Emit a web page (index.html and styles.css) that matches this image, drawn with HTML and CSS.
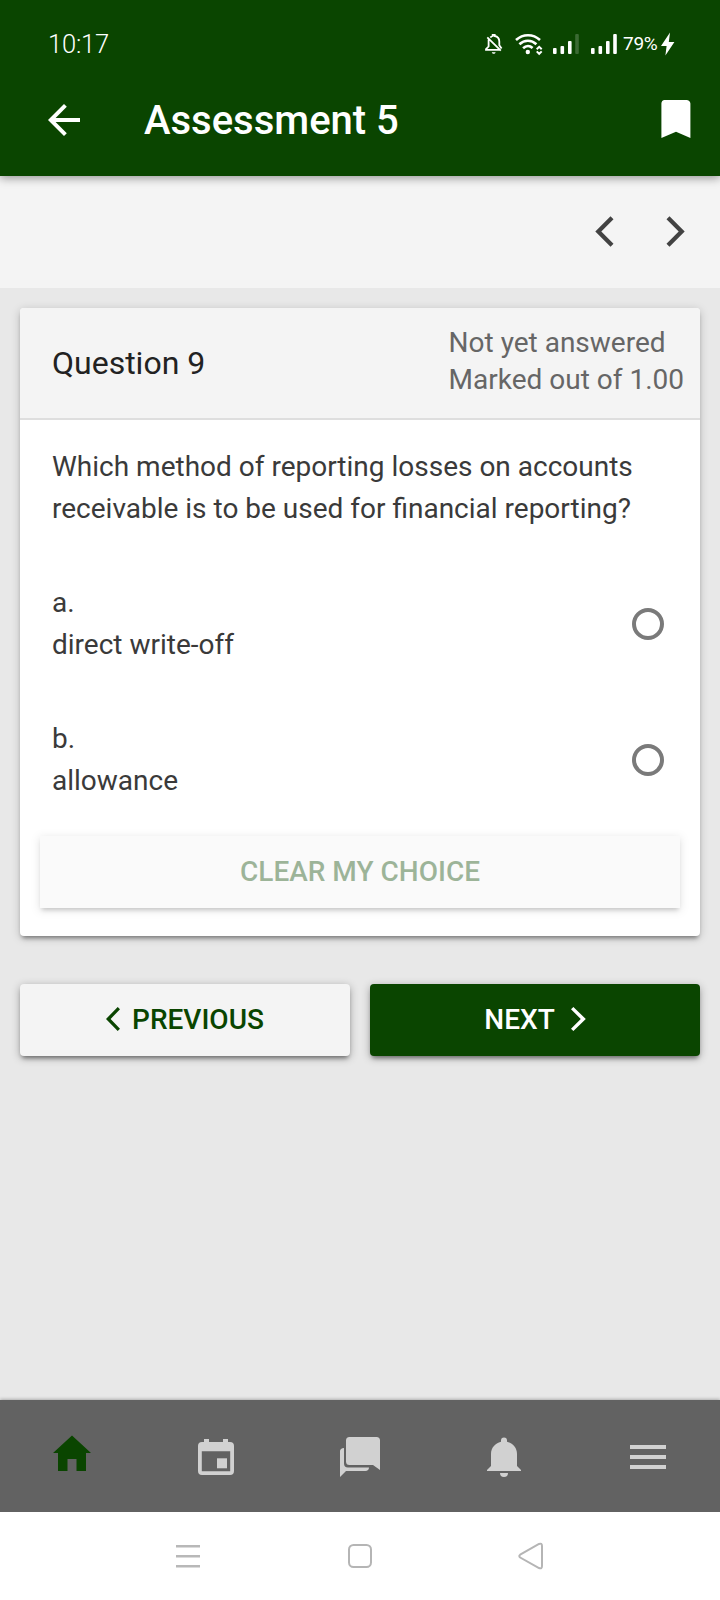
FILE: index.html
```html
<!DOCTYPE html>
<html lang="en">
<head>
<meta charset="utf-8">
<title>Assessment 5</title>
<link rel="stylesheet" href="styles.css">
</head>
<body>
<div class="app">
  <header class="header">
    <div class="status">
      <span class="clock">10:17</span>
      <div class="status-icons">
        <svg class="bell-off" width="18" height="24" viewBox="0 0 18 24" fill="none" stroke="#fff" stroke-width="1.8"><path d="M5.300 5.500C6 4.800 6.800 4.300 7.700 4V2.800h2V4c2.900.6 4.600 2.900 4.600 5.500v3.700l2.300 3.300M3.600 7.500v7L1 17.200v.7h13.500M2.300 5.400 15.800 18.700"/><path d="M6.800 20.200h3.800c-.6 2.200-3.200 2.200-3.800 0z" fill="#fff" stroke="none"/></svg>
        <svg class="wifi" width="28" height="24" viewBox="0 0 28 24" fill="none" stroke="#fff" stroke-width="2.600"><path d="M1 8C8 1.600 18 1.600 25 8M4.400 12.200c5-4.700 12-4.700 17 0M8.100 16.200c3-2.800 6.700-2.800 9.500-.2"/><circle cx="12.800" cy="20" r="2.200" fill="#fff" stroke="none"/><path d="m21.700 17.200 2.500-2.400 2.500 2.400M21.700 19.400l2.500 2.400 2.500-2.400" stroke-width="2"/></svg>
        <svg class="signal" width="27" height="24" viewBox="0 0 27 24" fill="#fff"><rect y="16" width="3.6" height="6" rx="1"/><rect x="7.5" y="14" width="3.6" height="8" rx="1"/><rect x="15" y="9" width="3.6" height="13" rx="1"/><rect x="22.2" y="2" width="3.6" height="20" rx="1" opacity=".2"/></svg>
        <svg class="signal" width="27" height="24" viewBox="0 0 27 24" fill="#fff"><rect y="16" width="3.6" height="6" rx="1"/><rect x="7.5" y="14" width="3.6" height="8" rx="1"/><rect x="15" y="9" width="3.6" height="13" rx="1"/><rect x="22.2" y="2" width="3.6" height="20" rx="1"/></svg>
        <span class="battery">79%</span>
        <svg class="bolt" width="14" height="24" viewBox="0 0 14 24" fill="#fff"><path d="M9 .5 0 14h5.600L4.400 23.500 13.400 10H7.800z"/></svg>
      </div>
    </div>
    <div class="toolbar">
      <svg class="back" width="32" height="32" viewBox="0 0 32 32" fill="#fff"><path d="M32 14H7.600L18.800 2.800 16 0 0 16l16 16 2.800-2.800L7.600 18H32z"/></svg>
      <h1 class="title">Assessment 5</h1>
      <svg class="bookmark" width="30" height="38" viewBox="0 0 30 38" fill="#fff"><path d="M3.600 0h21.800C27.600 0 29.400 1.600 29.400 3.600V38L15 31.700.4 38V3.600C.4 1.600 1.600 0 3.600 0z"/></svg>
    </div>
  </header>
  <nav class="pager">
    <svg width="19" height="31" viewBox="0 0 19 31" fill="#424242"><path d="M18.500 3.300 15.500.3.300 15.500l15.200 15.200 3-3L6.300 15.500z"/></svg>
    <svg width="19" height="31" viewBox="0 0 19 31" fill="#424242"><path d="M.5 3.300 3.500.3l15.200 15.200L3.500 30.700l-3-3 12.200-12.200z"/></svg>
  </nav>
  <main class="content">
    <section class="card">
      <div class="card-head">
        <h2 class="question">Question 9</h2>
        <div class="state"><p>Not yet answered</p><p>Marked out of 1.00</p></div>
      </div>
      <p class="prompt">Which method of reporting losses on accounts receivable is to be used for financial reporting?</p>
      <div class="answer"><p>a.<br>direct write-off</p><span class="radio"></span></div>
      <div class="answer"><p>b.<br>allowance</p><span class="radio"></span></div>
      <button class="button clear">CLEAR MY CHOICE</button>
    </section>
    <div class="actions">
      <button class="button previous"><svg width="14" height="24" viewBox="0 0 14 24" fill="#0a4500"><path d="M14 2.300 11.700 0 0 12l11.700 12 2.300-2.300L4.600 12z"/></svg>PREVIOUS</button>
      <button class="button next">NEXT<svg width="15" height="24" viewBox="0 0 15 24" fill="#fff"><path d="M0 2.300 2.400 0 14.800 12 2.400 24 0 21.700 9.800 12z"/></svg></button>
    </div>
  </main>
  <nav class="tabs">
    <svg width="48" height="48" viewBox="0 0 48 48"><path fill="#0a4500" d="M19.500 38V26h9v12H38V20h5L24 2.500 5 20h5v18z"/></svg>
    <svg width="48" height="48" viewBox="0 0 48 48" fill="#d1d1d1"><path fill-rule="evenodd" d="M12 6h5v3h14V6h5v3h2a4 4 0 0 1 4 4v25a4 4 0 0 1-4 4H10a4 4 0 0 1-4-4V13a4 4 0 0 1 4-4h2zM9.800 18.300v19.900h28.400V18.300z"/><path d="M25 25.300h10v10H25z"/></svg>
    <svg width="48" height="48" viewBox="0 0 48 48" fill="#d1d1d1"><path d="M13.500 4h27A3.500 3.500 0 0 1 44 7.500V37l-7-5H13.500A3.500 3.500 0 0 1 10 28.500v-21A3.500 3.500 0 0 1 13.500 4z"/><path d="M8 15v15.500a4 4 0 0 0 4 4h21c0 2-1.500 3.500-3.500 3.500H10l-6 6V18c0-1.500 1.500-3 4-3z"/></svg>
    <svg width="48" height="48" viewBox="0 0 48 48" fill="#d1d1d1"><path d="M24 4.500a3 3 0 0 1 3 3v1.300c6 1.500 10 6.200 10 12.200v12l4 4v1H7v-1l4-4V21c0-6 4-10.700 10-12.200V7.500a3 3 0 0 1 3-3zM20 40h8a4 4 0 0 1-8 0z"/></svg>
    <svg width="48" height="48" viewBox="0 0 48 48" fill="#d1d1d1"><path d="M6 12h36v4H6zM6 22h36v4H6zM6 32h36v4H6z"/></svg>
  </nav>
  <footer class="system-nav">
    <svg width="24" height="26" viewBox="0 0 24 26" stroke="#b8b8b8" stroke-width="2.400"><path d="M0 3.300h24M0 13.300h24M0 23.300h24"/></svg>
    <svg width="24" height="26" viewBox="0 0 24 26" fill="none" stroke="#b5b5b5" stroke-width="2"><rect x="1" y="2" width="22" height="22" rx="4.500"/></svg>
    <svg width="26" height="28" viewBox="0 0 26 28" fill="none" stroke="#b5b5b5" stroke-width="2"><path d="M2.200 12.700Q.4 14 2.200 15.500L21 26q3 1.300 3-2V4q0-3.300-3-2z"/></svg>
  </footer>
</div>
</body>
</html>
```
FILE: styles.css
```css
* { box-sizing: border-box; }
body { margin: 0; font-family: Roboto, "Liberation Sans", sans-serif; }
h1, h2, p { margin: 0; font-weight: 400; }
svg { display: block; flex: none; }
.app { display: flex; flex-direction: column; width: 720px; height: 1600px; background: #e8e8e8; }

.header { position: relative; z-index: 1; height: 176px; background: #0a4500; color: #fff; box-shadow: 0 2px 9px rgba(0, 0, 0, .4); }
.status { display: flex; justify-content: space-between; align-items: center; height: 64px; padding: 24px 45px 0 48px; }
.clock { font-size: 25.500px; font-weight: 300; line-height: 40px; letter-spacing: -.2px; }
.status-icons { display: flex; align-items: center; }
.wifi { margin-left: 12px; }
.signal { margin-left: 10px; }
.signal + .signal { margin-left: 11px; }
.battery { margin-left: 5px; width: 36px; font-size: 19px; line-height: 24px; letter-spacing: -.3px; }
.bolt { margin-left: 2px; }
.toolbar { display: flex; align-items: center; height: 112px; padding: 0 29px 0 48px; }
.title { flex: 1; margin-left: 64px; padding-top: 2px; font-size: 40px; font-weight: 500; line-height: 48px; }
.bookmark { margin-bottom: 2px; }

.pager { display: flex; justify-content: flex-end; align-items: center; gap: 52px; height: 112px; padding: 0 35px 1px; background: #f4f4f4; }

.content { flex: 1; padding: 20px; }
.card { height: 628px; border-radius: 4px; background: #fff; color: #3a3a3a; font-size: 28px; line-height: 42px; box-shadow: 0 4px 4px -2px rgba(0, 0, 0, .4), 0 2px 10px rgba(0, 0, 0, .2); }
.card-head { display: flex; justify-content: space-between; align-items: center; height: 112px; padding: 0 16px 4px 32px; border-bottom: 2px solid #dedede; border-radius: 4px 4px 0 0; background: #f4f4f4; }
.question { padding-top: 4px; color: #222; font-size: 32px; line-height: 40px; }
.state { color: #666; line-height: 37px; }
.prompt { padding: 26px 32px 0; }
.answer { display: flex; justify-content: space-between; align-items: center; height: 136px; padding: 0 36px 0 32px; }
.prompt + .answer { margin-top: 26px; }
.radio { width: 32px; height: 32px; border: 4px solid #7a7a7a; border-radius: 50%; }

.button { display: flex; align-items: center; justify-content: center; height: 72px; padding: 0; border: 0; border-radius: 4px; font: 500 28px/36px Roboto, "Liberation Sans", sans-serif; box-shadow: 0 4px 4px -2px rgba(0, 0, 0, .4), 0 2px 8px rgba(0, 0, 0, .3); }
.button svg { margin-bottom: 2px; }
.clear { width: 640px; margin: 8px 20px 0; border-radius: 0; background: #f4f4f4; color: #0a4500; opacity: .4; }
.actions { display: grid; grid-template-columns: 1fr 1fr; gap: 20px; margin-top: 48px; }
.previous { gap: 12px; background: #f4f4f4; color: #0a4500; }
.next { gap: 16px; background: #0a4500; color: #fff; }

.tabs { display: grid; grid-template-columns: repeat(5, 1fr); place-items: center; height: 112px; padding-top: 2px; background: #626262; box-shadow: 0 -1px 3px rgba(0, 0, 0, .25); }
.system-nav { display: flex; align-items: center; gap: 148px; height: 88px; padding-left: 176px; background: #fff; }
.system-nav svg:last-child { margin-left: -2px; }
```
